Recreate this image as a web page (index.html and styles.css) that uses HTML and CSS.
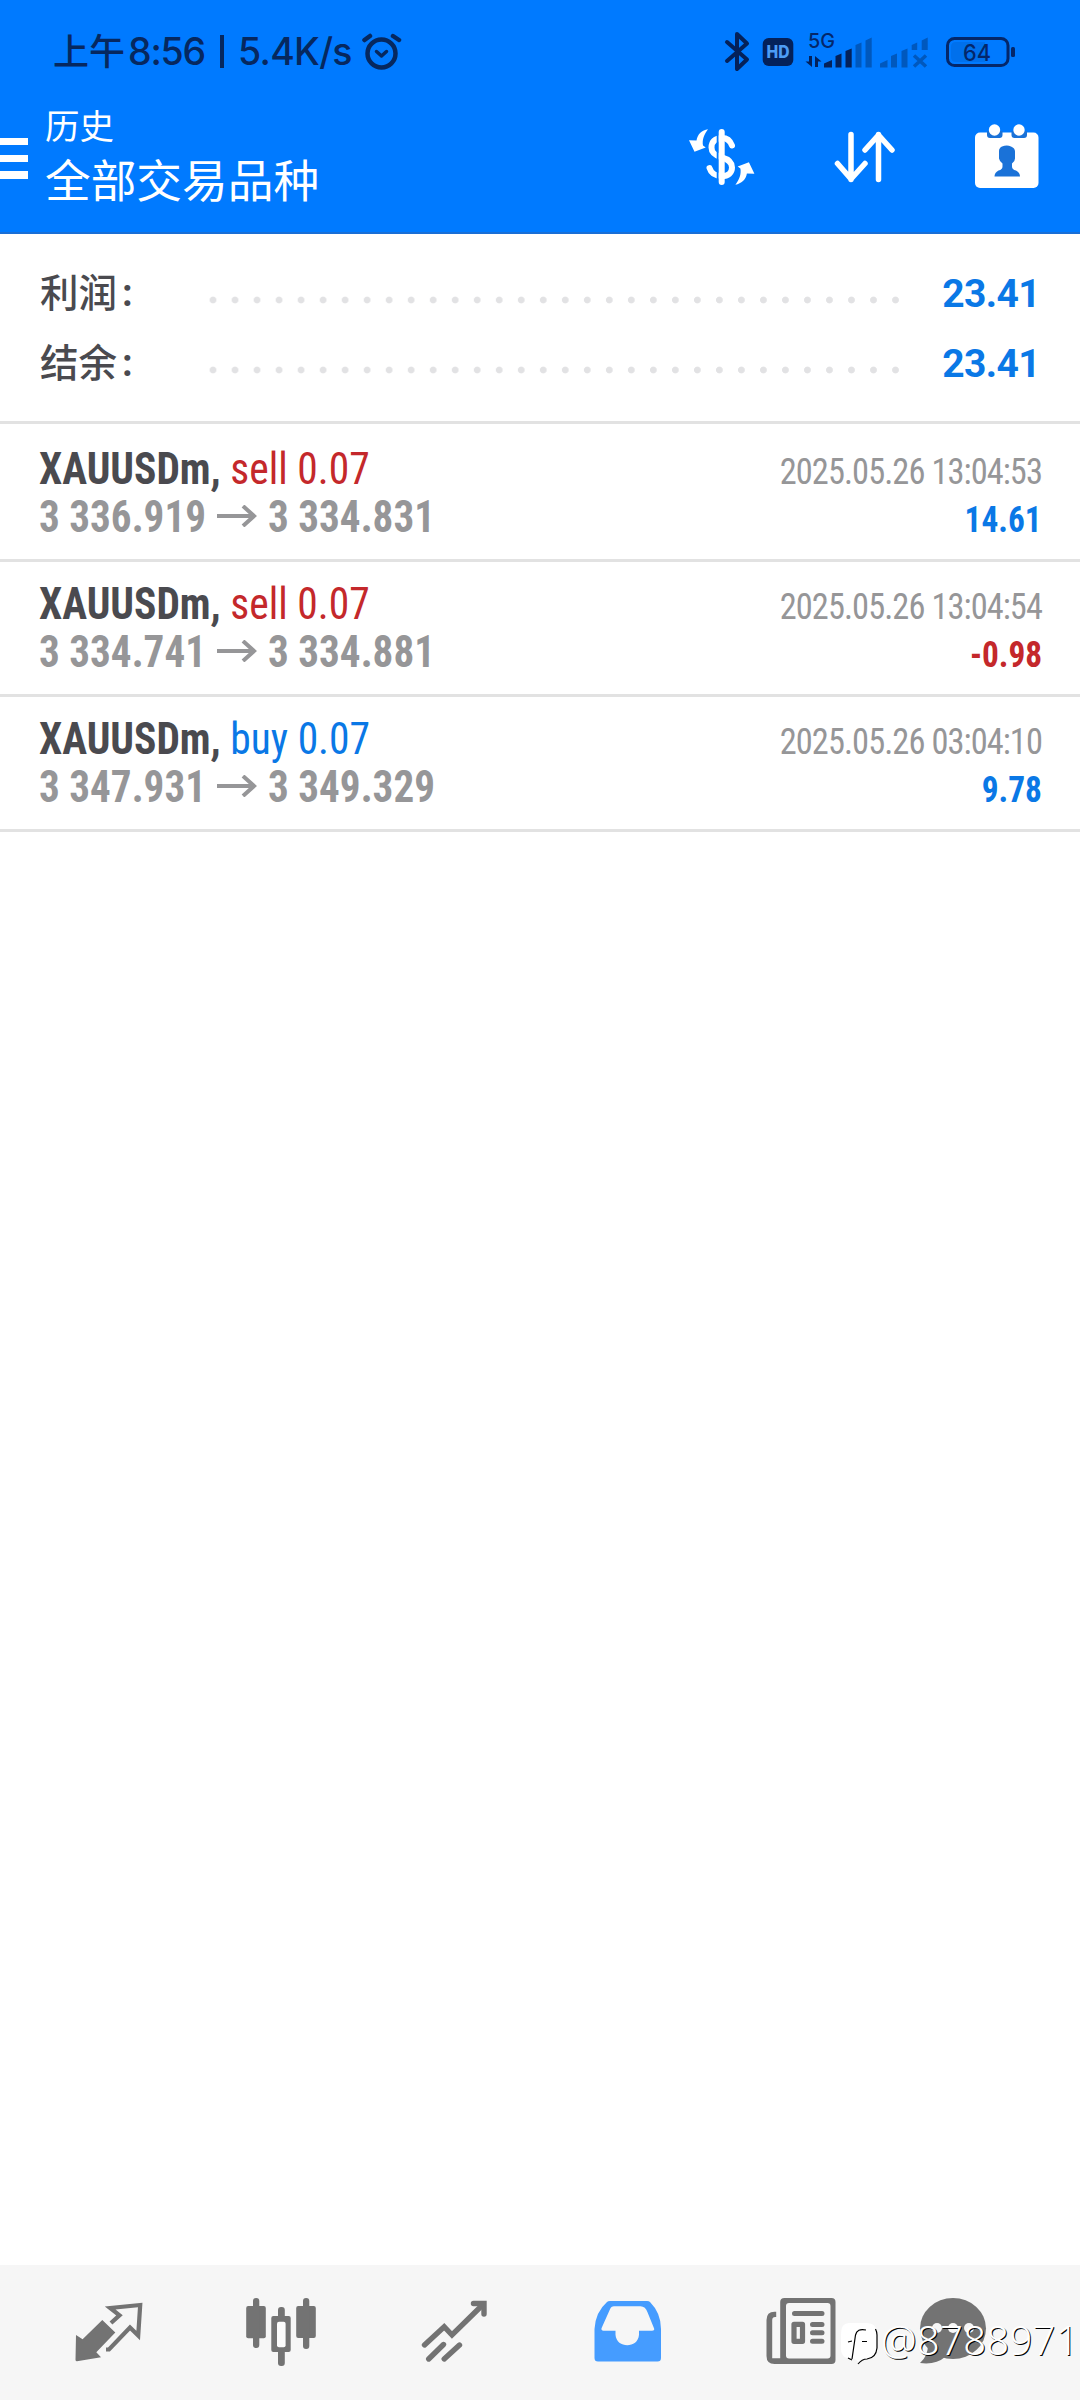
FILE: index.html
```html
<!DOCTYPE html>
<html lang="zh-CN">
<head>
<meta charset="utf-8">
<title>历史</title>
<link rel="stylesheet" href="styles.css">
</head>
<body>
<div class="app">
  <header class="top">
    <div class="status">
      <span class="ampm">上午</span><span class="time">8:56</span><i class="pipe"></i><span class="rate">5.4K/s</span>
      <svg class="alarm" width="40" height="38" viewBox="0 0 40 38" fill="none" stroke="#06285f" stroke-linecap="round" stroke-linejoin="round"><circle cx="19.500" cy="20.500" r="14" stroke-width="4.500"/><path d="M2.500 7 8 3M31 3l6 4" stroke-width="4.500"/><path d="m14.500 18.500 5 4.500 5-4.500" stroke-width="3.500"/></svg>
      <svg class="signals" width="300" height="50" viewBox="720 25 300 50">
        <path d="M727 42 747 59.500 737 69V34l10 9.500L727 61" fill="none" stroke="#04215a" stroke-width="4" stroke-linejoin="round" stroke-linecap="round"/>
        <rect x="762.700" y="38" width="30.600" height="28" rx="6" fill="#04215a"/>
        <text class="hd" x="766.500" y="57.500" textLength="23" lengthAdjust="spacingAndGlyphs">HD</text>
        <text class="g5" x="808" y="48" textLength="27" lengthAdjust="spacingAndGlyphs">5G</text>
        <path d="M809 56h3v11l-6.500-5.500H809zM818 67h-3V56l6.500 5.500H818z" fill="#04215a"/>
        <path d="M824 67.500v-4l8-3.500v7.500zM835.500 67.500V56l6-2.500v14zM845.500 67.500V51l6.200-2.500v19z" fill="#04215a"/>
        <path d="M855.500 67.500V45l6-2.500v25zM865.500 67.500v-27l6.200-3v30zM880 67.500v-4l7.500-3.500v7.500zM891 67.500V56l6-2.500v14zM901.500 67.500V51l6-2.500v19zM911.700 50v-5l5.500-2.500V50zM921.700 50v-9.500l6-3V50z" fill="#0058bd"/>
        <path d="m914 55.500 12 11M926 55.500l-12 11" stroke="#0058bd" stroke-width="3.500"/>
        <rect x="947.500" y="38.500" width="60.500" height="27" rx="7" fill="#007aff" stroke="#04276a" stroke-width="3"/>
        <path d="M956 42h29v20h-29q-5 0-5-5V47q0-5 5-5z" fill="#0070ec"/>
        <rect x="1011" y="47" width="4" height="10" rx="1.500" fill="#04276a"/>
        <text class="pct" x="963" y="61" textLength="28" lengthAdjust="spacingAndGlyphs">64</text>
      </svg>
    </div>
    <div class="toolbar">
      <div class="burger"><i></i><i></i><i></i></div>
      <div class="titles"><div class="sub">历史</div><div class="main">全部交易品种</div></div>
      <svg class="a1" width="68" height="58" viewBox="0 0 68 58"><g fill="#fff"><path d="M20 1.300C14 2.500 9.500 6 8.500 12.500L1 12.200 6.500 23.700 17.700 19.500 15 17.500C14 12 16 6.500 20 1.300z"/><path d="M20 1.300C14 2.500 9.500 6 8.500 12.500L1 12.200 6.500 23.700 17.700 19.500 15 17.500C14 12 16 6.500 20 1.300z" transform="rotate(180 33.700 29)"/></g><path d="M44 17.500C42 12 39 10 34 10C27 10 23.500 14 23.500 19.500C23.500 25 27 27.500 34 29.500C41 31.500 44 35 44 39.500C44 45 40 48 34 48C27 48 23 45 21.500 40" fill="none" stroke="#fff" stroke-width="6" stroke-linecap="round"/><path d="M29.700 5v48" stroke="#007aff" stroke-width="2"/><path d="M33.700 4v50" stroke="#fff" stroke-width="6" stroke-linecap="round"/></svg>
      <svg class="a2" width="62" height="52" viewBox="0 0 62 52" fill="none" stroke="#fff" stroke-width="5.500" stroke-linecap="round" stroke-linejoin="round"><path d="M17 3.500v45M3.500 32.500l13.500 15.500 14-15.500M44.500 48.500v-45M31 19 44.500 4 58 19"/></svg>
      <svg class="a3" width="64" height="65" viewBox="0 0 64 65"><rect y="8.500" width="63.500" height="55.500" rx="5" fill="#fff"/><path d="M12 7h15.500v4q0 3-3 3h-9.500q-3 0-3-3zM36.500 7H52v4q0 3-3 3h-9.500q-3 0-3-3z" fill="#1a72d8"/><g fill="#fff"><circle cx="19.500" cy="6" r="5.700"/><circle cx="44" cy="6" r="5.700"/></g><path d="M24 27q0-3 3-4.500 5-2 9 0 4 1.500 4 5v7q0 3-3 5v3q0 3 4 4 4 2 4 6H19.500q0-4 4-6 4-1 4-4v-3q-3-2-3.500-5z" fill="#1a72d8"/></svg>
    </div>
  </header>
  <section class="summary">
    <div class="line"><span class="label">利润</span><span class="colon">:</span><span class="dots"></span><span class="sum">23.41</span></div>
    <div class="line"><span class="label">结余</span><span class="colon">:</span><span class="dots"></span><span class="sum">23.41</span></div>
  </section>
  <main class="deals">
    <article class="deal">
      <div class="row"><div class="sym"><b>XAUUSDm,</b> <span class="sell">sell 0.07</span></div><time>2025.05.26 13:04:53</time></div>
      <div class="row"><div class="price"><span class="from">3 336.919</span><svg width="40" height="22" viewBox="0 0 40 22"><path d="M0 11h37M26 1l11 10-11 10"/></svg><span class="to">3 334.831</span></div><div class="pl buy">14.61</div></div>
    </article>
    <article class="deal">
      <div class="row"><div class="sym"><b>XAUUSDm,</b> <span class="sell">sell 0.07</span></div><time>2025.05.26 13:04:54</time></div>
      <div class="row"><div class="price"><span class="from">3 334.741</span><svg width="40" height="22" viewBox="0 0 40 22"><path d="M0 11h37M26 1l11 10-11 10"/></svg><span class="to">3 334.881</span></div><div class="pl sell">-0.98</div></div>
    </article>
    <article class="deal">
      <div class="row"><div class="sym"><b>XAUUSDm,</b> <span class="buy">buy 0.07</span></div><time>2025.05.26 03:04:10</time></div>
      <div class="row"><div class="price"><span class="from">3 347.931</span><svg width="40" height="22" viewBox="0 0 40 22"><path d="M0 11h37M26 1l11 10-11 10"/></svg><span class="to">3 349.329</span></div><div class="pl buy">9.78</div></div>
    </article>
  </main>
  <nav class="tabs">
    <svg width="80" height="76" viewBox="68 54 80 76"><path d="m76 95 6.600 4.300L102.300 80l13 12.500-19 19.800 4.700 5-24 4q-1.500 0-1.500-1.500z" fill="#737373"/><path d="m111 83 8.500-7.700L110.200 68l30-3-2 30.500-8.200-8L109 109.500h-3" fill="none" stroke="#737373" stroke-width="4.200"/></svg>
    <svg width="80" height="76" viewBox="241 54 80 76" fill="#737373"><rect x="246.200" y="66" width="19.600" height="32.300" rx="2"/><rect x="253" y="58" width="6.300" height="50" rx="3"/><rect x="296.200" y="66" width="19.600" height="32" rx="2"/><rect x="303" y="58" width="6.300" height="51" rx="3"/><rect x="278" y="67" width="6.800" height="59" rx="3"/><rect x="271.300" y="76" width="19.400" height="36" rx="2"/><rect x="277" y="81.700" width="8.600" height="25.500" rx="2" fill="#fbfbfb"/></svg>
    <svg width="80" height="76" viewBox="414 54 80 76" fill="none" stroke="#737373" stroke-width="5.400"><path d="M424.500 105 444.200 86.700 452 95 483 64.500M428.700 119 443.500 104.500M444.200 119 459.500 105" stroke-linecap="round"/><path d="M473.500 63.500h10.500v10.500" stroke-linecap="round"/></svg>
    <svg width="80" height="76" viewBox="587 54 80 76"><path fill-rule="evenodd" d="M607 62q1-1 3-1h37q2 0 3 1 11 11 11 27v29q0 3.500-3.500 3.500h-59.500q-3.500 0-3.500-3.500V89q1-17 12.500-27zM614 66.300q-3 0-4 3l-8.500 19q-.5 2.400 2 2.400h12v4c1 14 22.500 14 23.500 0v-4h13q3 0 2-2.400l-6.500-16q-2-6-7-6z" fill="#459cff"/></svg>
    <svg width="80" height="76" viewBox="760 54 80 76"><path fill-rule="evenodd" d="M784.500 58h47q4 0 4 4v58q0 4-4 4h-57q-8 0-8-8V80q0-8.300 8-8.300h1.700V77h-1q-3 0-3 3v38.300h8V62q0-4 4.300-4zM789 63q-3 0-3 3v49.500q0 3 3 3h38.500q3 0 3-3V66q0-3-3-3z" fill="#737373"/><path d="M794.500 73.600h27.500M812.500 84.500h9.500M812.500 92.700h9.500M812.500 101.200h9.500" stroke="#737373" stroke-width="5" stroke-linecap="round"/><rect x="794" y="84.300" width="8.500" height="17" fill="none" stroke="#737373" stroke-width="5.200" stroke-linejoin="round"/></svg>
    <svg width="80" height="76" viewBox="913 54 80 76"><ellipse cx="953" cy="88.500" rx="33" ry="30.500" fill="#737373"/><path d="M928 105q0 11-8 18 16 2 25-6z" fill="#737373"/><g fill="#f6f6f6"><circle cx="937" cy="88" r="5"/><circle cx="953" cy="88" r="5"/><circle cx="969" cy="88" r="5"/></g></svg>
    <div class="mark"><svg width="40" height="44" viewBox="0 0 40 44"><path d="M10 1h17q11 0 11 11v15q-1 10-10 10-5 0-8 4.500-2-4.500-6-4.500Q2 37 2 27V12Q2 1 10 1z" fill="#fff"/><path d="M36.500 7q1.500 3 1.500 6v13q-1 10-10 11-5 0-9 5M27 8q-9-2-10.500 5L13 37M9 20l4-1M23 19.500h5M9 36l4 2" fill="none" stroke="#000" stroke-width="1.200"/></svg><span>@8788971</span></div>
  </nav>
</div>
</body>
</html>
```

FILE: styles.css
```css
* { box-sizing: border-box; }
body { margin: 0; background: #fff; font-family: Roboto, "Noto Sans CJK SC", sans-serif; }
.app { width: 1080px; height: 2400px; display: flex; flex-direction: column; }
svg { display: block; flex: none; }

.top { height: 234px; background: #007aff; border-bottom: 2px solid #1a6fd6; }
.status { height: 100px; padding-left: 53px; display: flex; align-items: flex-start; color: #06285f; font: 500 37.500px/42px Inter, "Noto Sans CJK SC", sans-serif; white-space: nowrap; }
.ampm { width: 75px; padding-top: 31px; font-size: 36px; }
.time { width: 92px; padding-top: 31px; letter-spacing: -1.200px; }
.pipe { width: 4px; height: 33px; margin-top: 35px; background: #06285f; }
.rate { width: 124px; margin-left: 14px; padding-top: 31px; letter-spacing: -.700px; }
.alarm { margin-top: 33px; }
.signals { margin: 25px 0 0 auto; margin-right: 60px; }
.hd { font: 800 17px Inter, sans-serif; fill: #4c9cf5; }
.g5 { font: 500 20px Inter, sans-serif; fill: #04276a; }
.pct { font: 500 23px Inter, sans-serif; fill: #04276a; }

.toolbar { display: flex; align-items: flex-start; color: #fff; }
.burger { width: 28px; padding-top: 38px; display: grid; gap: 9.500px; }
.burger i { height: 7.200px; background: #fff; }
.titles { width: 643px; padding-left: 17px; }
.sub { font: 400 34.500px/48px "Noto Sans CJK SC", sans-serif; }
.main { font: 400 45.700px/60px "Noto Sans CJK SC", sans-serif; }
.a1 { margin: 28px 0 0 17px; }
.a2 { margin: 31px 0 0 78px; }
.a3 { margin: 24px 0 0 79px; }

.summary { height: 190px; padding: 23px 40px 0; border-bottom: 3px solid #e2e2e2; }
.line { height: 70px; display: flex; align-items: center; }
.label { width: 82px; padding-bottom: 4px; font: 500 38.500px/66px "Noto Sans CJK SC", sans-serif; color: #4a4a4f; }
.colon { width: 80px; padding-top: 2px; font-size: 38px; font-weight: 700; color: #4a4a4f; }
.dots { width: 704px; height: 8px; margin-top: 16px; background: radial-gradient(circle at center, #e2e2e4 3px, transparent 3.800px) 0 0 / 22.030px 8px; }
.sum { margin-left: auto; padding-top: 4px; font-size: 39px; font-weight: 700; letter-spacing: -.600px; color: #0a78e6; }

.deal { height: 135px; padding: 18px 38px 0 39px; border-bottom: 3px solid #e2e2e2; }
.deal:first-child { height: 138px; padding-top: 21px; }
.row { height: 48px; display: flex; justify-content: space-between; font-stretch: 75%; font-size: 44px; line-height: 48px; white-space: nowrap; }
.sym { color: #4a4a4f; transform: scaleX(.943); transform-origin: left; }
.price { display: flex; align-items: center; font-weight: 700; color: #969698; }
.price svg { margin: 0 11px 3px 0; fill: none; stroke: #969698; stroke-width: 4; }
.from { width: 178px; }
.from, .to { transform: scaleX(.935); transform-origin: left; }
time { font-size: 37px; line-height: 54px; letter-spacing: -1px; color: #969698; transform: scaleX(.93); transform-origin: right; }
.pl { font-size: 37px; line-height: 54px; font-weight: 700; transform: scaleX(.9); transform-origin: right; }
.sym .sell, .pl.sell { color: #c4282b; }
.sym .buy, .pl.buy { color: #0a78e6; }

.tabs { position: relative; height: 135px; margin-top: auto; padding: 29px 0 0 21.500px; background: #f6f6f6; display: grid; grid-template-columns: repeat(5, 173px) 133px; justify-items: center; align-items: start; }
.mark { position: absolute; left: 839px; top: 57px; display: flex; color: #fff; font: 300 40px/36px "Noto Sans", sans-serif; text-shadow: 1px 1px 0 #000; }
.mark span { margin-left: 2px; letter-spacing: .300px; }
```
